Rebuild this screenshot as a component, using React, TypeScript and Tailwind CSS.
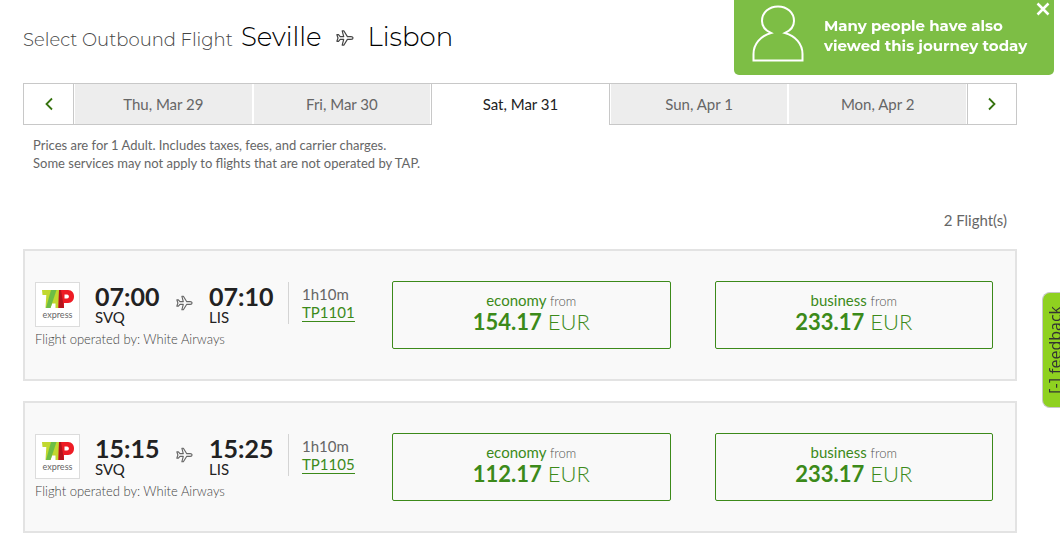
import { useState } from 'react';

const days = ['Thu, Mar 29', 'Fri, Mar 30', 'Sat, Mar 31', 'Sun, Apr 1', 'Mon, Apr 2'];

const flights = [
  { number: 'TP1101', depart: '07:00', arrive: '07:10', economy: '154.17', business: '233.17' },
  { number: 'TP1105', depart: '15:15', arrive: '15:25', economy: '112.17', business: '233.17' },
];

function PlaneIcon({ className }: { className: string }) {
  return (
    <svg viewBox="0 0 18 16" className={className} fill="none" stroke="currentColor" strokeWidth="1.200" strokeLinejoin="round" aria-hidden="true">
      <path d="M17 8c0-.9-.9-1.400-2-1.400h-3.600L7.800.8H6.200l1.500 5.800H4.200L2.500 4.700H.9L2 8 .9 11.300h1.600l1.700-1.900h3.500l-1.500 5.800h1.600l3.600-5.800H15c1.100 0 2-.5 2-1.400z" />
    </svg>
  );
}

function Chevron({ flip = false }: { flip?: boolean }) {
  return (
    <svg viewBox="0 0 8 14" className={`h-3.5 w-2 ${flip ? 'rotate-180' : ''}`} fill="none" stroke="currentColor" strokeWidth="1.800" aria-hidden="true">
      <path d="M7 1.500 1.500 7 7 12.500" />
    </svg>
  );
}

function TapLogo() {
  return (
    <div className="flex size-[45px] shrink-0 flex-col items-center border border-[#dcdcdc] bg-white pt-[7px]">
      <svg viewBox="0 0 32 18" className="h-[18px] w-8" aria-label="TAP">
        <path fill="#c1d82f" d="M0 0h12L8 18H3.500l.8-13H.5z" />
        <path fill="#c1d82f" d="M12 0h6v18h-4.500v-4.500H10L8.500 18H5z" />
        <path fill="#6cbd45" d="M9 0h5.500L8.500 18H4z" />
        <path fill="#ee1c25" d="M17 0h9c8 0 8 13 0 13h-4v5h-5.500z" />
        <path fill="#b3141d" d="M17 0h2l3 18h-5.500z" />
        <path fill="#fff" d="M22.500 4.500H25c2.500 0 2.500 4 0 4h-2.500z" />
      </svg>
      <span className="text-[9px] leading-[14px] text-[#666]">express</span>
    </div>
  );
}

function Fare({ cabin, price }: { cabin: string; price: string }) {
  return (
    <button className="h-[68px] rounded-xs border border-[#3c8a1a] pb-1.5 text-[#3c8a1a]">
      <span className="block text-[15px] leading-[18px]">
        {cabin} <span className="text-[13px] font-light text-[#555]">from</span>
      </span>
      <span className="block text-[22px] leading-6 font-light">
        <b className="font-bold">{price}</b> EUR
      </span>
    </button>
  );
}

function Stop({ time, code }: { time: string; code: string }) {
  return (
    <div className="w-[65px] pt-px">
      <div className="text-[25px] leading-[26px] font-bold">{time}</div>
      <div className="text-[15px] leading-4">{code}</div>
    </div>
  );
}

export default function App() {
  const [selected, setSelected] = useState(2);
  const [showNotice, setShowNotice] = useState(true);

  return (
    <div className="overflow-x-hidden bg-white pr-[43px] pb-[18px] pl-[23px] font-['Lato',sans-serif] text-[#666]">
      {/* Heading */}
      <h1 className="flex h-[83px] items-baseline pt-[21px] font-['Montserrat','Inter',sans-serif] text-[26px] leading-8 font-light text-black">
        <span className="mr-2 text-[18px] text-[#444]">Select Outbound Flight</span>
        Seville
        <PlaneIcon className="mx-3.5 h-4 w-[18px] text-[#444]" />
        Lisbon
      </h1>

      {/* Date bar */}
      <nav className="flex h-[42px] border border-[#c8c8c8] text-[15px]">
        <button aria-label="Previous days" className="flex w-[50px] items-center justify-center border-r border-[#c8c8c8] text-[#36730f]">
          <Chevron />
        </button>
        <div className="grid flex-1 grid-cols-5">
          {days.map((day, i) => (
            <button
              key={day}
              onClick={() => setSelected(i)}
              className={
                i === selected
                  ? '-mb-px border-x border-[#c8c8c8] bg-white pb-px text-[#222]'
                  : 'border-x border-white bg-[#ededed]'
              }
            >
              {day}
            </button>
          ))}
        </div>
        <button aria-label="Next days" className="flex w-[49px] items-center justify-center border-l border-[#c8c8c8] text-[#36730f]">
          <Chevron flip />
        </button>
      </nav>

      <p className="mt-[11px] ml-2.5 text-[13px] leading-[18px]">
        Prices are for 1 Adult. Includes taxes, fees, and carrier charges.
        <br />
        Some services may not apply to flights that are not operated by TAP.
      </p>
      <p className="mt-[38px] mr-2.5 text-right text-[15px] leading-5">2 Flight(s)</p>

      {/* Flights */}
      <div className="mt-[19px] flex flex-col gap-5">
        {flights.map((flight) => (
          <div key={flight.number} className="flex border-2 border-[#e3e3e3] bg-[#f9f9f9] py-[30px] pr-[22px] pl-2.5">
            <div className="w-[357px] shrink-0">
              <div className="flex pt-px text-[#222]">
                <TapLogo />
                <div className="ml-[15px] flex">
                  <Stop time={flight.depart} code="SVQ" />
                  <PlaneIcon className="mx-4 mt-[13px] h-4 w-[17px] text-[#666]" />
                  <Stop time={flight.arrive} code="LIS" />
                </div>
                <div className="ml-[14px] h-[42px] border-l border-[#d4d4d4] pl-[13px] text-[15px] leading-[18px] text-[#666]">
                  <div className="pt-[3px]">1h10m</div>
                  <a href="#" className="inline-block border-b border-[#3c8a1a] leading-[17px] text-[#3c8a1a]">
                    {flight.number}
                  </a>
                </div>
              </div>
              <p className="mt-[3px] text-[13px] leading-[18px] font-light text-[#444]">Flight operated by: White Airways</p>
            </div>
            <div className="grid flex-1 grid-cols-2 gap-11">
              <Fare cabin="economy" price={flight.economy} />
              <Fare cabin="business" price={flight.business} />
            </div>
          </div>
        ))}
      </div>

      {/* Notice */}
      {showNotice && (
        <div className="fixed top-0 right-1.5 flex h-[75px] w-80 rounded-b-[5px] bg-[#7dbe45] text-white">
          <svg viewBox="0 0 52 57" className="mt-[5px] ml-[18px] h-[57px] w-[52px]" fill="none" stroke="currentColor" strokeWidth="2" aria-hidden="true">
            <path d="M1.500 55.500V49c0-10 7-18 17.500-21C13.500 25.500 10 21 10 16 10 7.500 17 1.500 26 1.500S42 7.500 42 16c0 5-3.500 9.500-9 12C43.500 31 50.500 39 50.500 49v6.500z" />
          </svg>
          <p className="mt-4 ml-5 font-['Montserrat','Inter',sans-serif] text-[15px] leading-5 font-bold">
            Many people have also
            <br />
            viewed this journey today
          </p>
          <button aria-label="Close" onClick={() => setShowNotice(false)} className="absolute top-0.5 right-1">
            <svg viewBox="0 0 14 14" className="size-3.5" stroke="currentColor" strokeWidth="2.500" aria-hidden="true">
              <path d="M1.500 1.500l11 11M12.500 1.500l-11 11" />
            </svg>
          </button>
        </div>
      )}

      <button className="fixed top-[292px] right-0 flex h-[116px] w-[18px] items-center rounded-l-lg border border-r-0 border-[#c8c8c8] bg-[#8fd120] text-[#333]">
        <span className="rotate-180 font-['Open_Sans',sans-serif] text-[16px] leading-6 whitespace-nowrap [writing-mode:vertical-rl]">
          [-] feedback
        </span>
      </button>
    </div>
  );
}
